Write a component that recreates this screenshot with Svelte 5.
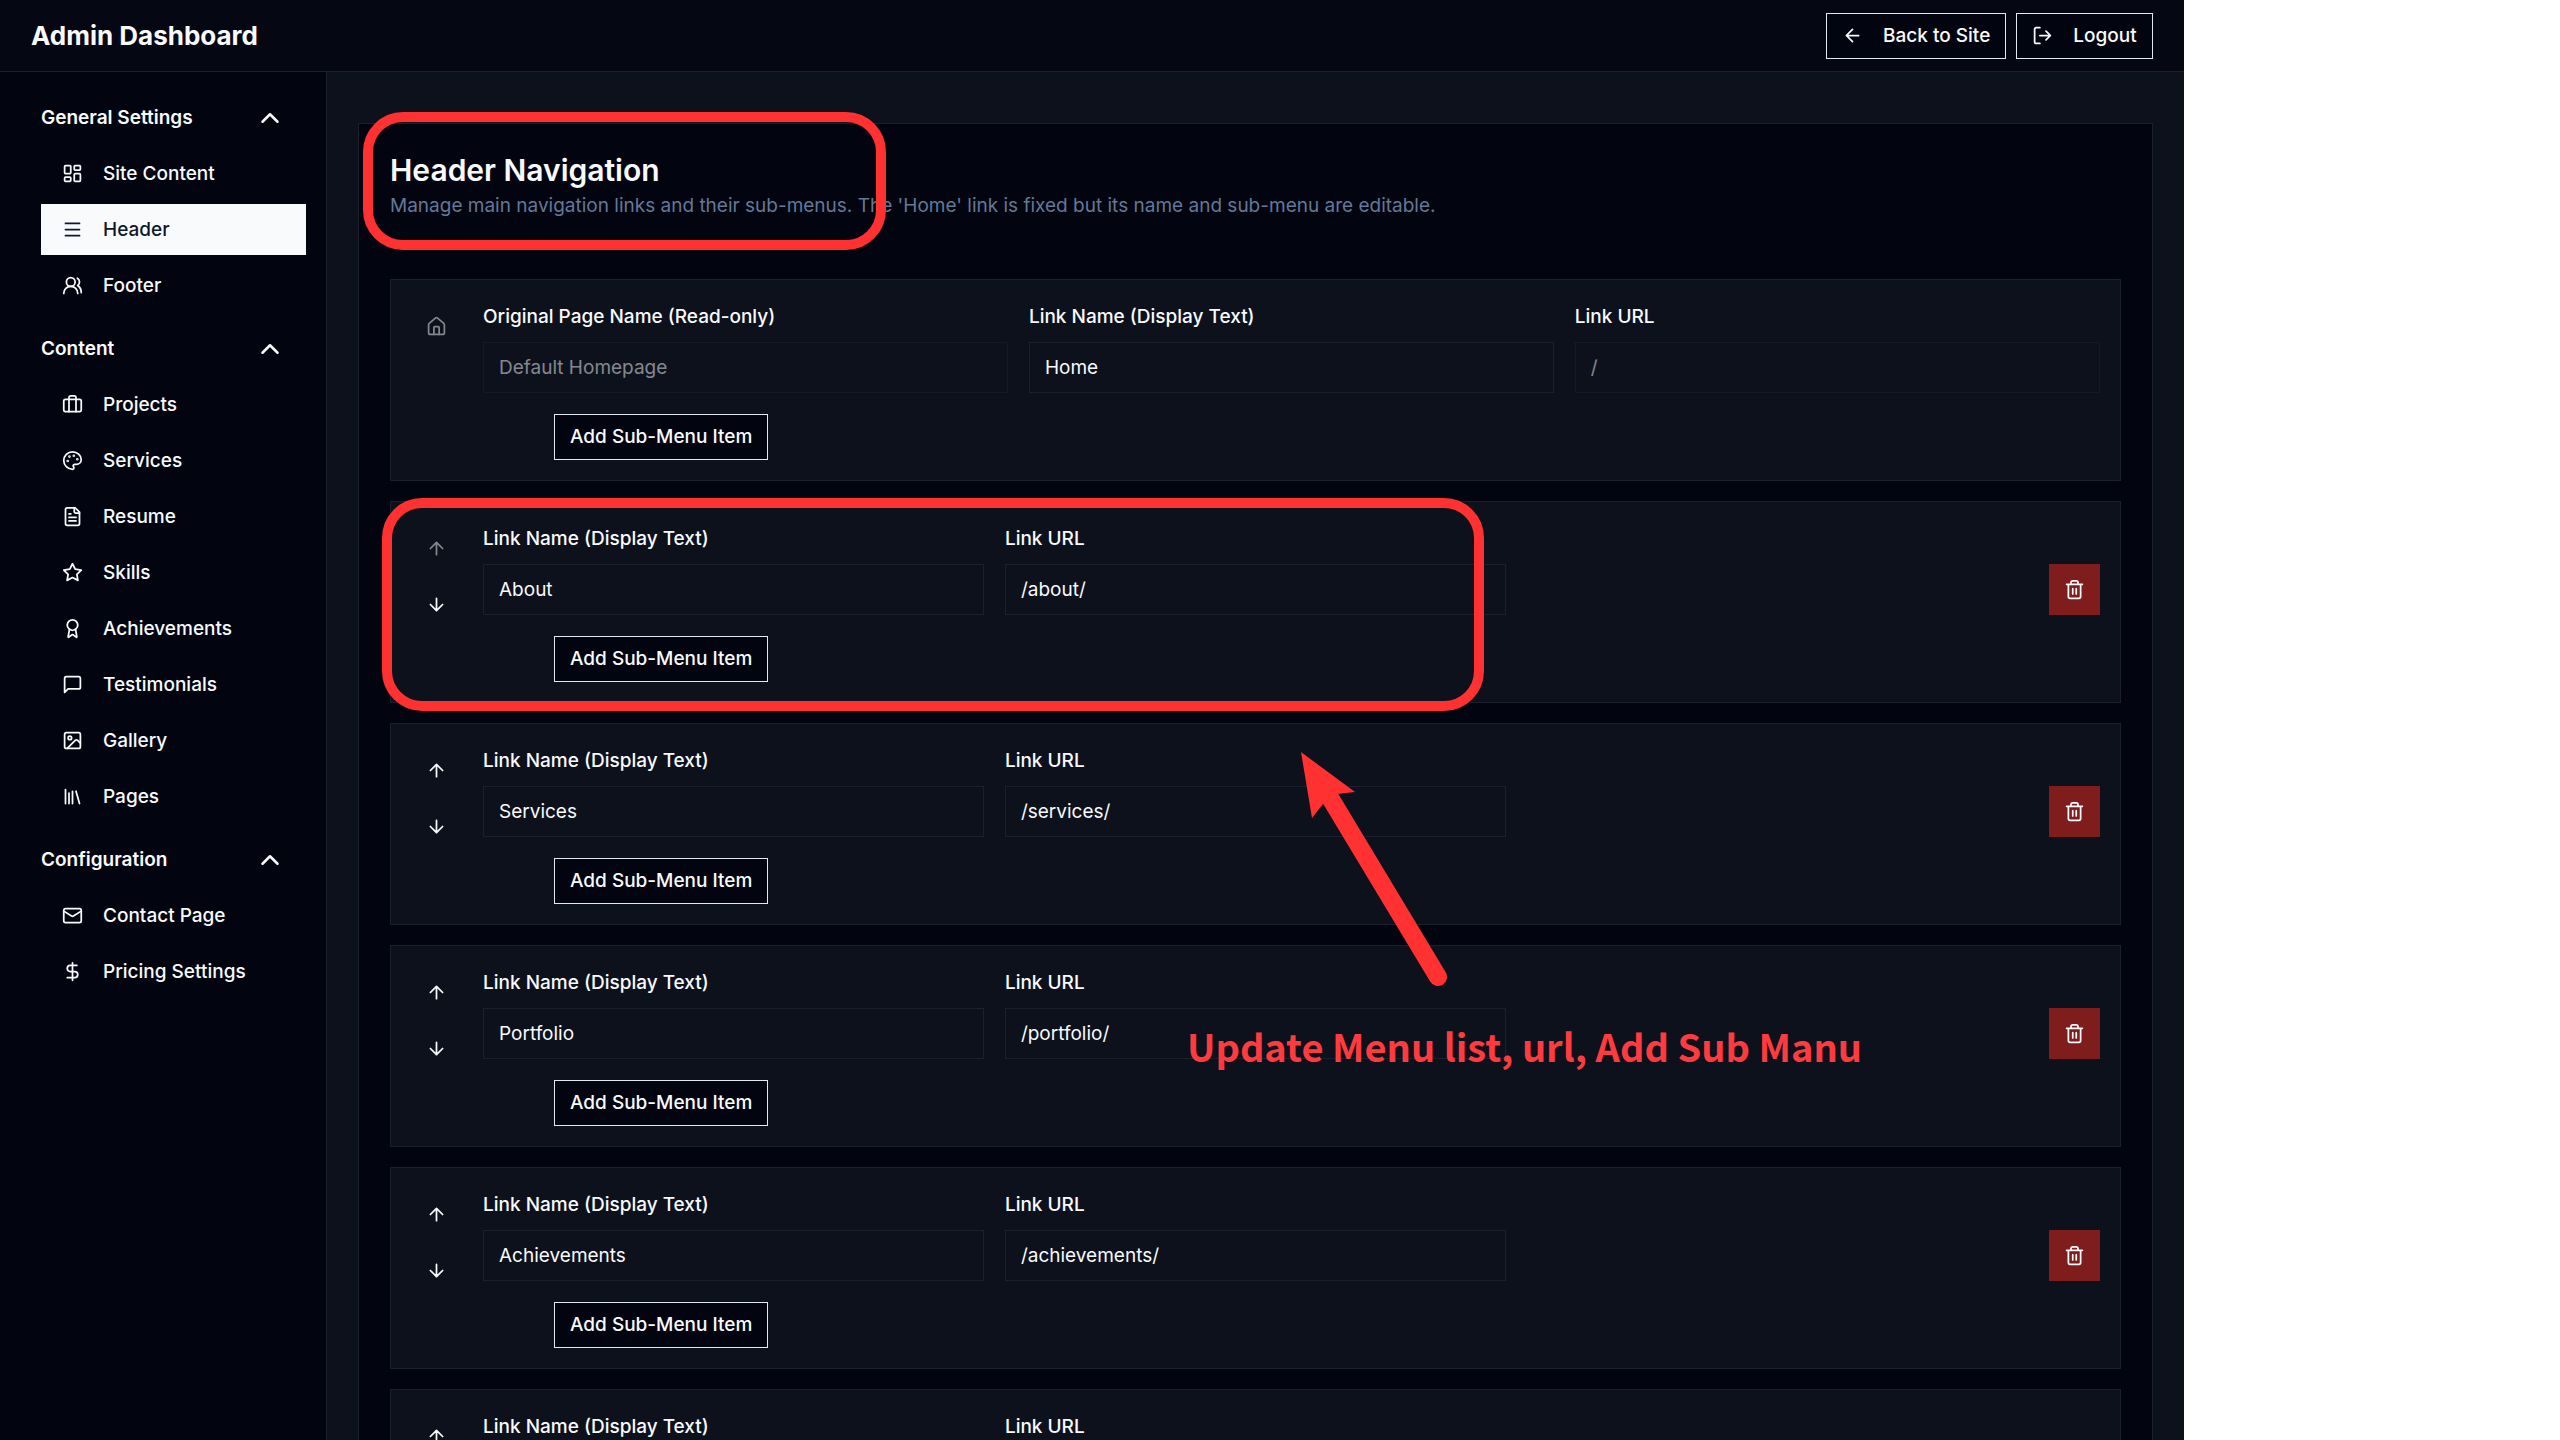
<script>
	const groups = [
		{
			title: 'General Settings',
			items: [
				{ name: 'Site Content', icon: 'dashboard' },
				{ name: 'Header', icon: 'menu' },
				{ name: 'Footer', icon: 'users' }
			]
		},
		{
			title: 'Content',
			items: [
				{ name: 'Projects', icon: 'briefcase' },
				{ name: 'Services', icon: 'palette' },
				{ name: 'Resume', icon: 'file' },
				{ name: 'Skills', icon: 'star' },
				{ name: 'Achievements', icon: 'award' },
				{ name: 'Testimonials', icon: 'message' },
				{ name: 'Gallery', icon: 'image' },
				{ name: 'Pages', icon: 'library' }
			]
		},
		{
			title: 'Configuration',
			items: [
				{ name: 'Contact Page', icon: 'mail' },
				{ name: 'Pricing Settings', icon: 'dollar' }
			]
		}
	];

	// 24x24 stroke icons
	const icons = {
		dashboard:
			'<rect width="7" height="9" x="3" y="3" rx="1"/><rect width="7" height="5" x="14" y="3" rx="1"/><rect width="7" height="9" x="14" y="12" rx="1"/><rect width="7" height="5" x="3" y="16" rx="1"/>',
		menu: '<path d="M4 5h16M4 12h16M4 19h16"/>',
		users:
			'<path d="M18 21a8 8 0 0 0-16 0"/><circle cx="10" cy="8" r="5"/><path d="M22 20c0-3.37-2-6.5-4-8a5 5 0 0 0-.45-8.3"/>',
		briefcase:
			'<path d="M16 20V4a2 2 0 0 0-2-2h-4a2 2 0 0 0-2 2v16"/><rect width="20" height="14" x="2" y="6" rx="2"/>',
		palette:
			'<circle cx="13.5" cy="6.5" r=".5" fill="currentColor"/><circle cx="17.5" cy="10.5" r=".5" fill="currentColor"/><circle cx="8.5" cy="7.5" r=".5" fill="currentColor"/><circle cx="6.5" cy="12.5" r=".5" fill="currentColor"/><path d="M12 2C6.5 2 2 6.5 2 12s4.5 10 10 10c.926 0 1.648-.746 1.648-1.688 0-.437-.18-.835-.437-1.125-.29-.289-.438-.652-.438-1.125a1.64 1.64 0 0 1 1.668-1.668h1.996c3.051 0 5.555-2.503 5.555-5.554C21.965 6.012 17.461 2 12 2z"/>',
		file: '<path d="M15 2H6a2 2 0 0 0-2 2v16a2 2 0 0 0 2 2h12a2 2 0 0 0 2-2V7Z"/><path d="M14 2v4a2 2 0 0 0 2 2h4"/><path d="M10 9H8M16 13H8M16 17H8"/>',
		star: '<path d="M12 2l3.09 6.26L22 9.27l-5 4.87 1.18 6.88L12 17.77l-6.18 3.25L7 14.14 2 9.27l6.91-1.01L12 2z"/>',
		award:
			'<path d="m15.477 12.89 1.515 8.526a.5.5 0 0 1-.81.47l-3.58-2.687a1 1 0 0 0-1.197 0l-3.586 2.686a.5.5 0 0 1-.81-.469l1.514-8.526"/><circle cx="12" cy="8" r="6"/>',
		message: '<path d="M21 15a2 2 0 0 1-2 2H7l-4 4V5a2 2 0 0 1 2-2h14a2 2 0 0 1 2 2z"/>',
		image:
			'<rect width="18" height="18" x="3" y="3" rx="2"/><circle cx="9" cy="9" r="2"/><path d="m21 15-3.086-3.086a2 2 0 0 0-2.828 0L6 21"/>',
		library: '<path d="m16 6 4 14M12 6v14M8 8v12M4 4v16"/>',
		mail: '<rect width="20" height="16" x="2" y="4" rx="2"/><path d="m22 7-8.97 5.7a1.94 1.94 0 0 1-2.06 0L2 7"/>',
		dollar: '<path d="M12 2v20M17 5H9.5a3.5 3.5 0 0 0 0 7h5a3.5 3.5 0 0 1 0 7H6"/>',
		chevron: '<path d="m18 15-6-6-6 6"/>',
		back: '<path d="m12 19-7-7 7-7M19 12H5"/>',
		logout: '<path d="M9 21H5a2 2 0 0 1-2-2V5a2 2 0 0 1 2-2h4M16 17l5-5-5-5M21 12H9"/>',
		home: '<path d="M15 21v-8a1 1 0 0 0-1-1h-4a1 1 0 0 0-1 1v8"/><path d="M3 10a2 2 0 0 1 .709-1.528l7-5.999a2 2 0 0 1 2.582 0l7 5.999A2 2 0 0 1 21 10v9a2 2 0 0 1-2 2H5a2 2 0 0 1-2-2z"/>',
		up: '<path d="m5 12 7-7 7 7M12 19V5"/>',
		down: '<path d="M12 5v14M19 12l-7 7-7-7"/>',
		trash:
			'<path d="M3 6h18M19 6v14a2 2 0 0 1-2 2H7a2 2 0 0 1-2-2V6M8 6V4a2 2 0 0 1 2-2h4a2 2 0 0 1 2 2v2M10 11v6M14 11v6"/>'
	};

	let active = $state('Header');
	let closed = $state({});
	let home = $state('Home');
	let links = $state([
		{ name: 'About', url: '/about/' },
		{ name: 'Services', url: '/services/' },
		{ name: 'Portfolio', url: '/portfolio/' },
		{ name: 'Achievements', url: '/achievements/' },
		{ name: 'Contact', url: '/contact/' }
	]);

	const move = (from, to) => {
		const [link] = links.splice(from, 1);
		links.splice(to, 0, link);
	};

	const remove = (index) => {
		links.splice(index, 1);
	};
</script>

{#snippet icon(name)}
	<svg class="icon {name}" viewBox="0 0 24 24" aria-hidden="true">{@html icons[name]}</svg>
{/snippet}

<div class="shell">
	<header>
		<h1>Admin Dashboard</h1>
		<div class="actions">
			<a class="outline" href="#site">{@render icon('back')}Back to Site</a>
			<button class="outline" type="button">{@render icon('logout')}Logout</button>
		</div>
	</header>

	<div class="body">
		<nav>
			{#each groups as group}
				<section>
					<button
						class="group"
						type="button"
						aria-expanded={!closed[group.title]}
						onclick={() => (closed[group.title] = !closed[group.title])}
					>
						{group.title}
						{@render icon('chevron')}
					</button>
					{#if !closed[group.title]}
						{#each group.items as item}
							<a
								class="item"
								class:active={active === item.name}
								href="#{item.icon}"
								onclick={() => (active = item.name)}
							>
								{@render icon(item.icon)}
								{item.name}
							</a>
						{/each}
					{/if}
				</section>
			{/each}
		</nav>

		<main>
			<div class="card">
				<div class="intro">
					<h2>Header Navigation</h2>
					<p>
						Manage main navigation links and their sub-menus. The 'Home' link is fixed but its name
						and sub-menu are editable.
					</p>
				</div>

				<article>
					<div class="row">
						<div class="order"><span class="square muted">{@render icon('home')}</span></div>
						<div class="content">
							<div class="fields">
								<label>
									Original Page Name (Read-only)
									<input type="text" value="Default Homepage" disabled />
								</label>
								<label>
									Link Name (Display Text)
									<input type="text" bind:value={home} />
								</label>
								<label>
									Link URL
									<input type="text" value="/" disabled />
								</label>
							</div>
							<button class="outline sub" type="button">Add Sub-Menu Item</button>
						</div>
					</div>
				</article>

				{#each links as link, i}
					<article>
						<div class="row">
							<div class="order">
								<button
									class="square"
									type="button"
									aria-label="Move up"
									disabled={i === 0}
									onclick={() => move(i, i - 1)}>{@render icon('up')}</button
								>
								<button
									class="square"
									type="button"
									aria-label="Move down"
									disabled={i === links.length - 1}
									onclick={() => move(i, i + 1)}>{@render icon('down')}</button
								>
							</div>
							<div class="content">
								<div class="line">
									<div class="fields">
										<label>
											Link Name (Display Text)
											<input type="text" bind:value={link.name} />
										</label>
										<label>
											Link URL
											<input type="text" bind:value={link.url} />
										</label>
									</div>
									<button
										class="square delete"
										type="button"
										aria-label="Delete link"
										onclick={() => remove(i)}>{@render icon('trash')}</button
									>
								</div>
								<button class="outline sub" type="button">Add Sub-Menu Item</button>
							</div>
						</div>
					</article>
				{/each}
			</div>
		</main>
	</div>

	<!-- notes drawn over the page -->
	<div class="mark mark-title"></div>
	<div class="mark mark-link"></div>
	<svg class="pointer" viewBox="0 0 150 240" aria-hidden="true">
		<path d="M3 2 57 42 39 44 25 54 14 68z" />
		<path class="shaft" d="M31 46 140 227" />
	</svg>
	<p class="note">Update Menu list, url, Add Sub Manu</p>
</div>

<style>
	:global(body) {
		background: #fff;
	}

	.shell {
		--c-page: #020510;
		--c-panel: #0d111c;
		--c-stroke: #1a202d;
		--c-text: #f8fafc;
		--c-mark: #ff3131;
		position: relative;
		display: flex;
		flex-direction: column;
		box-sizing: border-box;
		width: 85.3%;
		height: 100vh;
		overflow: hidden;
		background: var(--c-panel);
		color: var(--c-text);
		font-family: Inter, 'Liberation Sans', sans-serif;
		font-size: 19px;
		line-height: 26px;
	}

	.shell :global(*) {
		box-sizing: border-box;
	}

	h1,
	h2,
	p {
		margin: 0;
	}

	button,
	input {
		font: inherit;
		color: inherit;
	}

	button {
		cursor: pointer;
	}

	.icon {
		flex: none;
		width: 21px;
		height: 21px;
		fill: none;
		stroke: currentColor;
		stroke-width: 2;
		stroke-linecap: round;
		stroke-linejoin: round;
	}

	.icon.chevron {
		width: 30px;
		height: 30px;
	}

	header {
		flex: none;
		display: flex;
		align-items: center;
		justify-content: space-between;
		height: 72px;
		padding: 0 31px;
		border-bottom: 1px solid var(--c-stroke);
		background: #050713;
	}

	h1 {
		font-size: 26px;
		font-weight: 700;
		line-height: 36px;
	}

	.actions {
		display: flex;
		gap: 10px;
	}

	.outline {
		display: inline-flex;
		align-items: center;
		gap: 20px;
		height: 46px;
		padding: 0 15px;
		border: 1px solid #e2e8f0;
		background: var(--c-page);
		color: var(--c-text);
		font-weight: 500;
		text-decoration: none;
		white-space: nowrap;
	}

	.body {
		flex: 1;
		display: flex;
		min-height: 0;
	}

	nav {
		flex: none;
		display: flex;
		flex-direction: column;
		gap: 12px;
		width: 327px;
		padding: 20px;
		border-right: 1px solid var(--c-stroke);
		background: var(--c-page);
	}

	section {
		display: flex;
		flex-direction: column;
		gap: 5px;
		padding-left: 21px;
	}

	.group {
		display: flex;
		align-items: center;
		justify-content: space-between;
		height: 51px;
		padding: 0 21px 0 0;
		border: none;
		background: none;
		font-weight: 600;
	}

	.item {
		display: flex;
		align-items: center;
		gap: 20px;
		height: 51px;
		padding: 0 21px;
		color: inherit;
		font-weight: 500;
		text-decoration: none;
	}

	.item.active {
		background: #f8fafc;
		color: #0f172a;
	}

	main {
		flex: 1;
		min-width: 0;
		padding: 51px 31px;
	}

	.card {
		display: flex;
		flex-direction: column;
		gap: 20px;
		padding: 30px 31px;
		border: 1px solid var(--c-stroke);
		background: var(--c-page);
	}

	.intro {
		margin-bottom: 40px;
	}

	h2 {
		font-size: 30px;
		font-weight: 600;
		line-height: 32px;
	}

	.intro p {
		margin-top: 7px;
		color: #647896;
	}

	article {
		padding: 21px 20px 20px;
		border: 1px solid var(--c-stroke);
		background: var(--c-panel);
	}

	.row,
	.line {
		display: flex;
		gap: 21px;
	}

	.line {
		align-items: flex-end;
	}

	.order {
		display: flex;
		flex-direction: column;
		gap: 5px;
	}

	.square {
		display: grid;
		place-items: center;
		flex: none;
		width: 51px;
		height: 51px;
		padding: 0;
		border: none;
		background: none;
	}

	.square:disabled,
	.muted {
		opacity: 0.5;
	}

	.delete {
		background: #7f1d1d;
	}

	.content {
		flex: 1;
		min-width: 0;
	}

	.fields {
		flex: 1;
		display: grid;
		grid-template-columns: repeat(3, 1fr);
		gap: 21px;
	}

	label {
		display: flex;
		flex-direction: column;
		gap: 10px;
		font-weight: 500;
		line-height: 31px;
	}

	input {
		width: 100%;
		height: 51px;
		padding: 0 15px;
		border: 1px solid #1a212e;
		border-radius: 0;
		background: transparent;
		font-weight: 400;
	}

	input:disabled {
		opacity: 0.5;
	}

	.sub {
		margin: 21px 0 0 71px;
	}

	.mark,
	.pointer,
	.note {
		position: absolute;
		pointer-events: none;
	}

	.mark {
		border: 10px solid var(--c-mark);
		border-radius: 40px;
	}

	.mark-title {
		top: 112px;
		left: 363px;
		width: 523px;
		height: 138px;
	}

	.mark-link {
		top: 498px;
		left: 382px;
		width: 1102px;
		height: 213px;
	}

	.pointer {
		top: 750px;
		left: 1298px;
		width: 150px;
		height: 240px;
		fill: var(--c-mark);
	}

	.shaft {
		stroke: var(--c-mark);
		stroke-width: 18;
		stroke-linecap: round;
	}

	.note {
		top: 1018px;
		left: 1187px;
		color: #ff3b3f;
		font-family: 'Noto Sans CJK SC', 'Noto Sans', sans-serif;
		font-size: 38px;
		font-weight: 700;
		line-height: 56px;
		white-space: nowrap;
	}
</style>
